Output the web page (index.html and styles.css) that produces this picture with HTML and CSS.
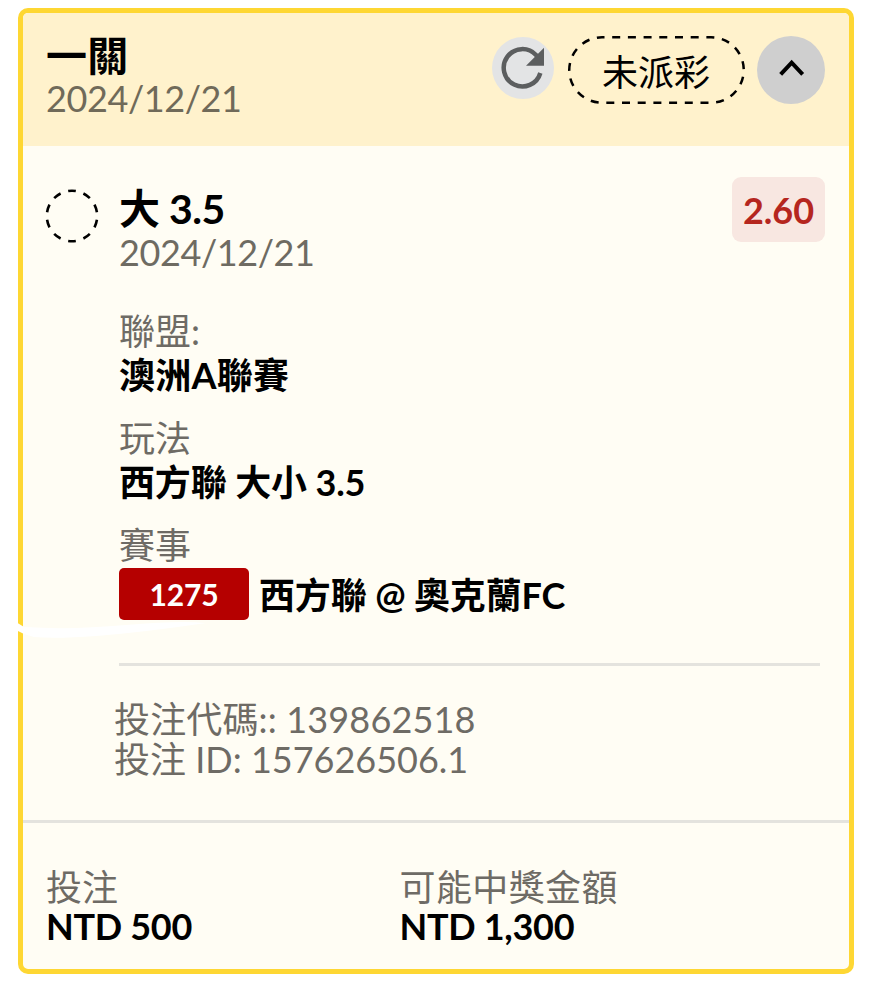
FILE: index.html
```html
<!DOCTYPE html>
<html lang="zh-Hant">
<head>
<meta charset="utf-8">
<title>投注</title>
<link rel="stylesheet" href="styles.css">
</head>
<body>
<article class="card">
  <header class="card-header">
    <div class="heading">
      <h1 class="title">一關</h1>
      <p class="date">2024/12/21</p>
    </div>
    <svg class="refresh" viewBox="36 109 186 186">
      <circle cx="129" cy="202" r="93" fill="#e3e4e5"/>
      <path d="M181 217A56 56 0 1 1 168 163L176 172" fill="none" stroke="#5c5e5f" stroke-width="13.5"/>
      <path d="M192 141V195H138Z" fill="#5c5e5f"/>
    </svg>
    <div class="status">
      <svg class="status-outline" viewBox="0 0 177 68">
        <path d="M34 1.25H143A32.75 32.75 0 0 1 143 66.75H34A32.75 32.75 0 0 1 34 1.25Z" fill="none" stroke="#000" stroke-width="2.5" stroke-dasharray="8 7.696" stroke-dashoffset="5.5"/>
      </svg>
      <span class="status-text">未派彩</span>
    </div>
    <svg class="collapse" viewBox="831 108 204 204">
      <circle cx="933" cy="210" r="102" fill="#cfcfcf"/>
      <path d="M902 223L935 188L968 223" fill="none" stroke="#000" stroke-width="12"/>
    </svg>
  </header>

  <section class="bet">
    <svg class="marker" viewBox="-27 -27 54 54">
      <circle r="25.2" fill="none" stroke="#000" stroke-width="2.6" pathLength="100" stroke-dasharray="5 5" stroke-dashoffset="2.5" transform="rotate(-90)"/>
    </svg>
    <div class="bet-body">
      <div class="bet-top">
        <div>
          <h2 class="title">大 3.5</h2>
          <p class="date">2024/12/21</p>
        </div>
        <span class="odds">2.60</span>
      </div>
      <dl class="details">
        <div><dt>聯盟:</dt><dd class="league">澳洲A聯賽</dd></div>
        <div><dt>玩法</dt><dd>西方聯 大小 3.5</dd></div>
        <div><dt>賽事</dt><dd class="match"><span class="match-no">1275</span><span>西方聯 @ 奧克蘭FC</span></dd></div>
      </dl>
      <div class="codes">
        <p class="ticket">投注代碼:: 139862518</p>
        <p>投注 ID: 157626506.1</p>
      </div>
    </div>
  </section>

  <footer class="totals">
    <div class="total"><span>投注</span><strong>NTD 500</strong></div>
    <div class="total"><span class="payout-label">可能中獎金額</span><strong>NTD 1,300</strong></div>
  </footer>

  <svg class="streak" viewBox="0 0 200 30">
    <path d="M0 7L8 12Q55 15 110 10T190 8Q130 17 80 21Q40 24 18 22L8 19L0 15Z" fill="#fff"/>
  </svg>
</article>
</body>
</html>
```
FILE: styles.css
```css
* { box-sizing: border-box; }

body {
  margin: 0;
  background: #fff;
  color: #000;
  font-family: Lato, "Noto Sans CJK TC", sans-serif;
  font-size: 36px;
}

h1, h2, p, dl, dt, dd { margin: 0; }

.card {
  position: relative;
  display: flex;
  flex-direction: column;
  width: 836px;
  height: 966px;
  margin: 8px 0 0 18px;
  border: 5px solid #fed733;
  border-radius: 10px;
  background: #fffdf4;
}

.card-header {
  display: flex;
  align-items: flex-start;
  height: 133px;
  padding: 18px 24px 0 23px;
  border-radius: 5px 5px 0 0;
  background: #fff2cc;
}

.heading { flex: 1; }

.title {
  font-size: 41px;
  font-weight: 700;
  line-height: 50px;
  letter-spacing: -0.5px;
}

.date {
  color: #6e6b62;
  line-height: 36px;
  letter-spacing: -0.4px;
}

.card-header .title {
  line-height: 49px;
  letter-spacing: 0.3px;
}

.card-header .date { color: #706a59; }

.refresh {
  width: 62px;
  height: 62px;
  margin-top: 6px;
}

.status {
  display: grid;
  place-items: center;
  width: 177px;
  height: 68px;
  margin: 5px 12.5px 0 13.5px;
}

.status-outline,
.status-text { grid-area: 1 / 1; }

.status-outline {
  width: 177px;
  height: 68px;
}

.status-text {
  line-height: 40px;
  padding-top: 3px;
}

.collapse {
  width: 68px;
  height: 68px;
  margin-top: 5px;
}

.bet {
  display: flex;
  gap: 20px;
  height: 674px;
  padding: 38px 24px 0 22px;
}

.marker {
  flex: none;
  width: 54px;
  height: 54px;
  margin-top: 5px;
}

.bet-body { flex: 1; }

.bet-top {
  display: flex;
  justify-content: space-between;
}

.odds {
  width: 93px;
  height: 65px;
  margin-top: -7px;
  border-radius: 9px;
  background: #f8e7e1;
  color: #b5261e;
  font-weight: 700;
  line-height: 67px;
  text-align: center;
}

.details {
  display: grid;
  gap: 19px;
  margin: 39px 5px 0 0;
  padding-bottom: 40px;
  border-bottom: 3px solid #e4e3de;
}

.details dt {
  color: #6e6b65;
  line-height: 44px;
}

.details dd {
  font-weight: 700;
  line-height: 44px;
  letter-spacing: -0.15px;
}

.details .league { letter-spacing: 0.25px; }

.details .match {
  display: flex;
  gap: 10px;
  margin-top: 1px;
  line-height: 55px;
}

.match-no {
  width: 130px;
  height: 52px;
  border-radius: 5px;
  background: #b50000;
  color: #fff;
  font-size: 30px;
  line-height: 53px;
  text-align: center;
}

.codes {
  margin: 33px 0 0 -5px;
  color: #6e6b65;
  line-height: 40px;
}

.ticket { letter-spacing: 0.15px; }

.totals {
  display: grid;
  grid-template-columns: 353.5px 1fr;
  flex: 1;
  padding: 45px 24px 0 23px;
  border-top: 3px solid #e4e3de;
}

.total {
  display: flex;
  flex-direction: column;
  line-height: 39px;
}

.total span { color: #6e6b65; }

.total .payout-label { letter-spacing: 0.4px; }

.total strong { letter-spacing: -0.3px; }

/* Pale brush stroke running over the left border */
.streak {
  position: absolute;
  top: 602px;
  left: -7px;
  width: 200px;
  height: 30px;
}
```
